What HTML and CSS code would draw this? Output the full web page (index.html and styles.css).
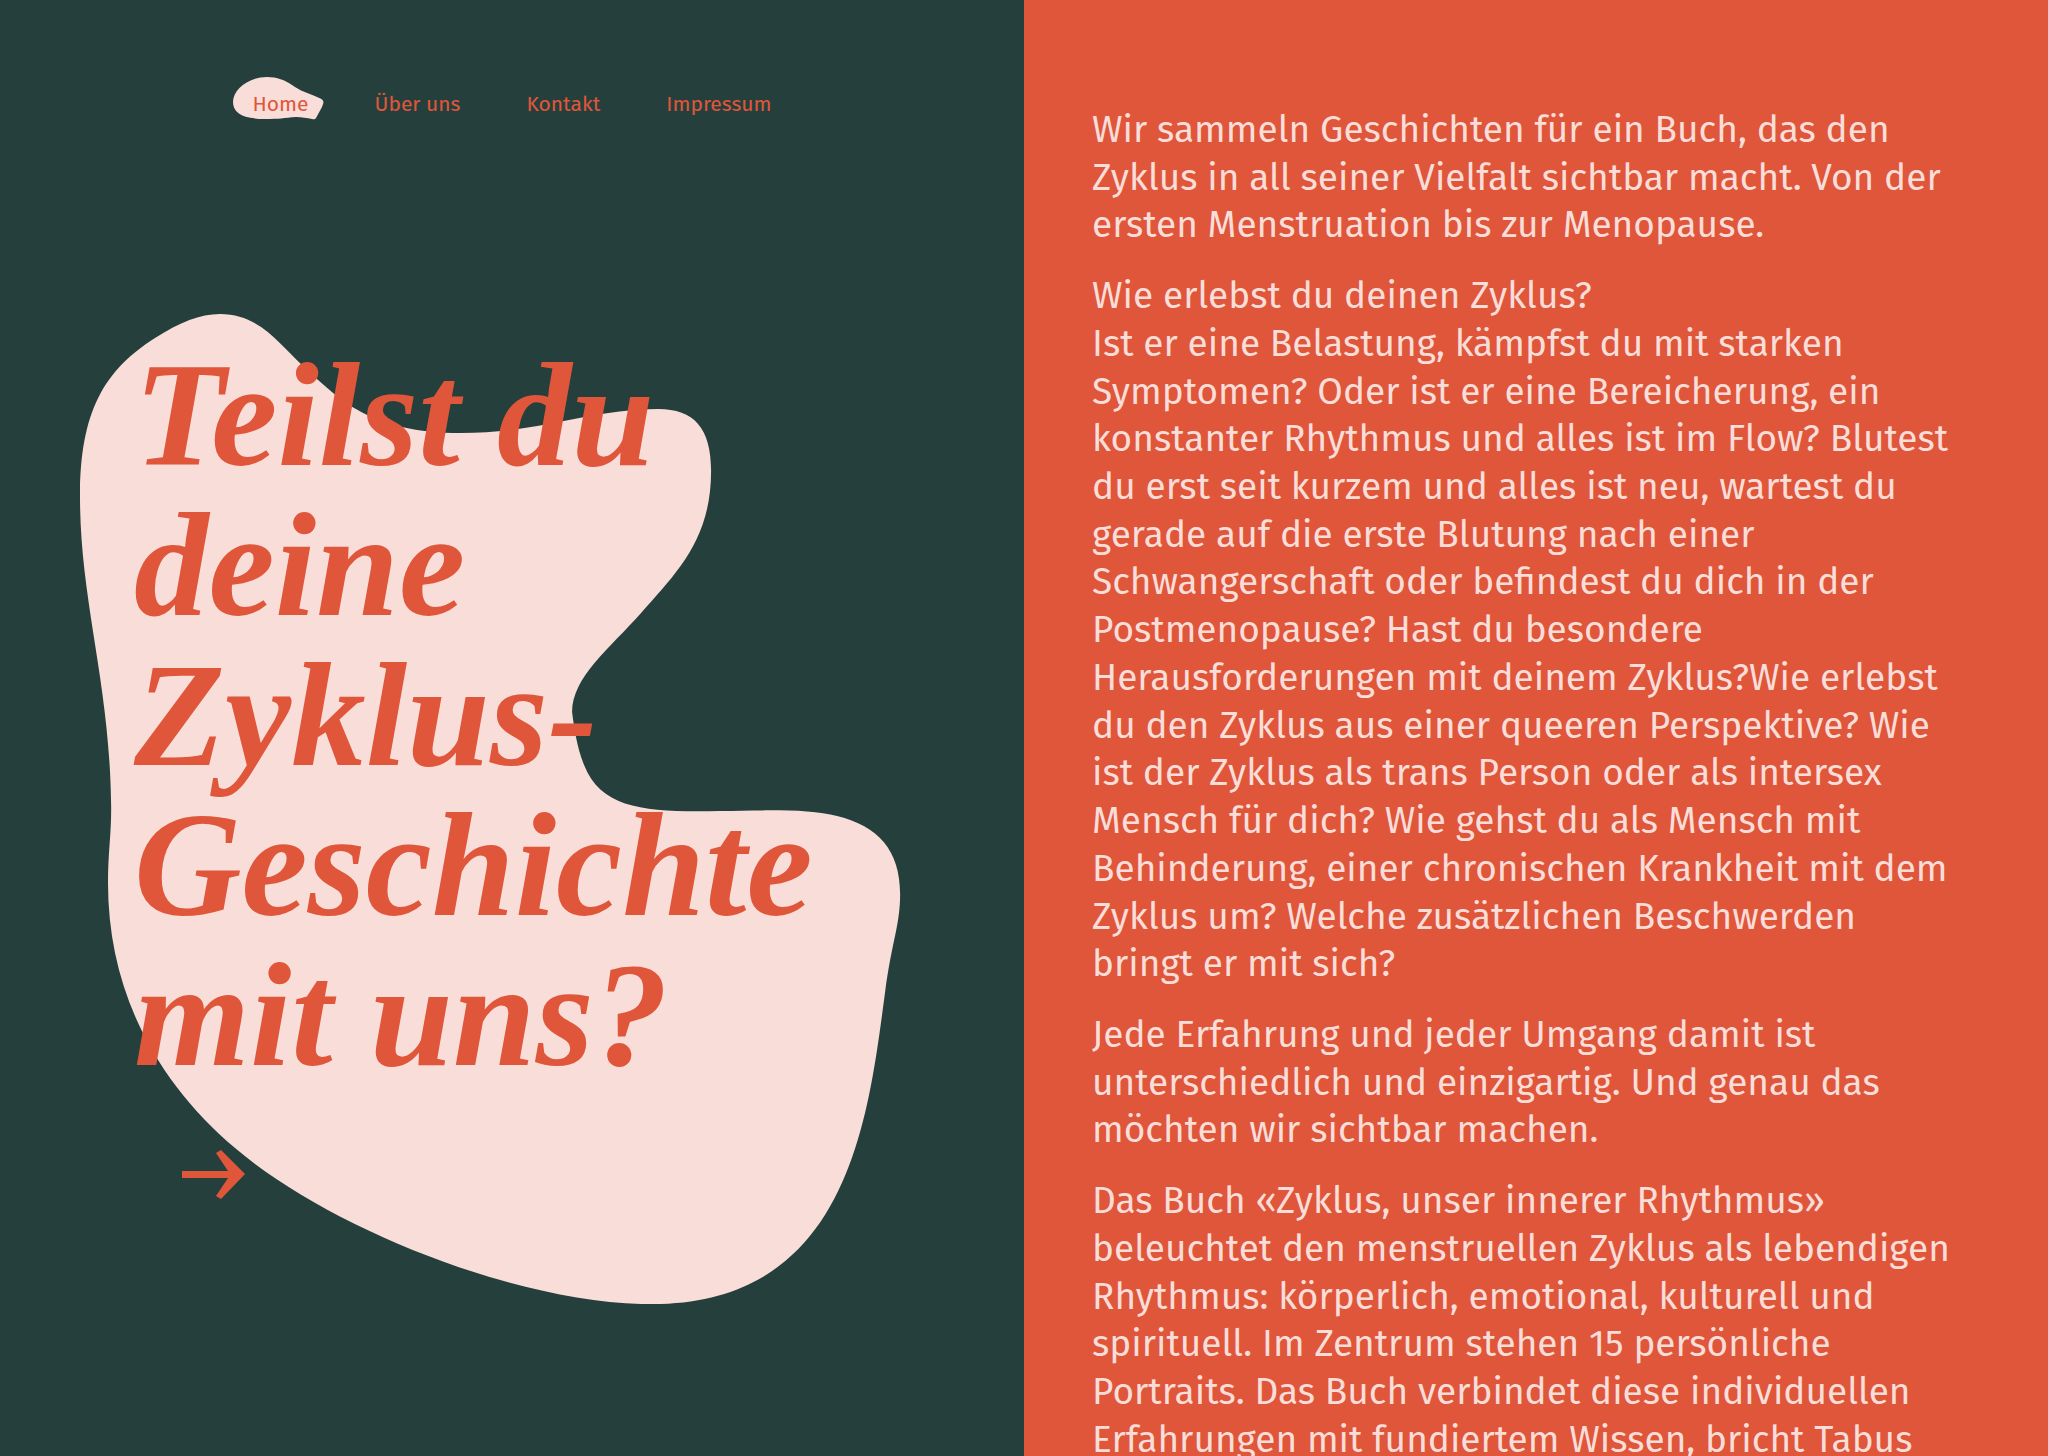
FILE: index.html
```html
<!DOCTYPE html>
<html lang="de">
<head>
  <meta charset="utf-8">
  <meta name="viewport" content="width=device-width, initial-scale=1">
  <title>Zyklus, unser innerer Rhythmus</title>
  <link rel="stylesheet" href="styles.css">
</head>
<body>
  <div class="split">
    <header class="intro">
      <nav class="nav" aria-label="Hauptnavigation">
        <a class="nav-link nav-link-active" href="#home" aria-current="page">
          <svg class="nav-blob" viewBox="233 77 91 43" aria-hidden="true">
            <path d="M233 102C233 90 248 77 267 77C277 77 285 80 292 85C300 91 308 93 317 97C325 100 324 102 322 107L316 118Q315 120 312 119C307 118 302 117 296 117C284 118 279 119 265 119C243 119 233 113 233 102Z"/>
          </svg>
          <span class="nav-text">Home</span>
        </a>
        <a class="nav-link" href="#ueber-uns">Über uns</a>
        <a class="nav-link" href="#kontakt">Kontakt</a>
        <a class="nav-link" href="#impressum">Impressum</a>
      </nav>
      <div class="hero">
        <svg class="hero-blob" viewBox="80 314 821 990" aria-hidden="true">
          <path d="M220 314C260 314 280 345 303 366C340 400 370 433 461 433C540 433 590 409 658 409C694 409 711 428 711 471C711 540 676 573 641 613C610 648 572 677 572 712C574 728 577 748 584 765C602 811 650 812 720 811C770 810 810 809 837 816C878 826 900 850 900 894C900 925 892 940 885 992C868 1117 850 1304 651 1304C520 1304 330 1229 235 1148C155 1080 108 990 108 883C108 850 112 830 111 800C109 680 80 600 80 497C80 410 105 370 155 338C180 322 200 314 220 314Z"/>
        </svg>
        <div class="hero-copy">
          <h1 class="title">Teilst du<br>deine<br>Zyklus-<br>Geschichte<br>mit uns?</h1>
          <a class="more" href="#mitmachen" aria-label="Weiter">
            <svg class="arrow" viewBox="0 0 66 52" aria-hidden="true">
              <path d="M2 23H48L36 5L41 2L65 26L41 51L36 48L48 30H2Z"/>
            </svg>
          </a>
        </div>
      </div>
    </header>
    <main class="story">
      <p>Wir sammeln Geschichten für ein Buch, das den Zyklus in all seiner Vielfalt sichtbar macht. Von der ersten Menstruation bis zur Menopause.</p>
      <p>Wie erlebst du deinen Zyklus?<br>Ist er eine Belastung, kämpfst du mit starken Symptomen? Oder ist er eine Bereicherung, ein konstanter Rhythmus und alles ist im Flow? Blutest du erst seit kurzem und alles ist neu, wartest du gerade auf die erste Blutung nach einer Schwangerschaft oder befindest du dich in der Postmenopause? Hast du besondere Herausforderungen mit deinem Zyklus?Wie erlebst du den Zyklus aus einer queeren Perspektive? Wie ist der Zyklus als trans Person oder als intersex Mensch für dich? Wie gehst du als Mensch mit Behinderung, einer chronischen Krankheit mit dem Zyklus um? Welche zusätzlichen Beschwerden bringt er mit sich?</p>
      <p>Jede Erfahrung und jeder Umgang damit ist unterschiedlich und einzigartig. Und genau das möchten wir sichtbar machen.</p>
      <p>Das Buch «Zyklus, unser innerer Rhythmus» beleuchtet den menstruellen Zyklus als lebendigen Rhythmus: körperlich, emotional, kulturell und spirituell. Im Zentrum stehen 15 persönliche Portraits. Das Buch verbindet diese individuellen Erfahrungen mit fundiertem Wissen, bricht Tabus</p>
    </main>
  </div>
</body>
</html>
```
FILE: styles.css
```css
:root {
  --green: #25403c;
  --red: #e0563a;
  --rose: #f9ddd8;
}

* {
  box-sizing: border-box;
}

body {
  margin: 0;
  background: var(--green);
  font-family: "Fira Sans", "PT Sans", Lato, sans-serif;
}

.split {
  display: grid;
  grid-template-columns: 1fr 1fr;
  height: 100vh;
  overflow: hidden;
}

.intro {
  color: var(--red);
  background: var(--green);
}

.nav {
  display: flex;
  justify-content: center;
  gap: 66px;
  padding-top: 89px;
  font-size: 21px;
  line-height: 30px;
}

.nav-link {
  color: inherit;
  text-decoration: none;
}

.nav-link-active {
  position: relative;
}

.nav-blob {
  position: absolute;
  top: -12px;
  left: -20px;
  width: 91px;
  height: 43px;
  fill: var(--rose);
}

.nav-text {
  position: relative;
}

.hero {
  display: grid;
  padding: 195px 12% 0 80px;
}

.hero-blob {
  grid-area: 1 / 1;
  width: 100%;
  fill: var(--rose);
}

.hero-copy {
  grid-area: 1 / 1;
  position: relative;
  padding: 26px 0 0 54px;
}

.title {
  margin: 0 0 58px;
  font: italic bold 149px/150px "Liberation Serif", "Times New Roman", serif;
}

.more {
  display: block;
  width: 66px;
  margin-left: 46px;
}

.arrow {
  display: block;
  width: 66px;
  height: 52px;
  fill: var(--red);
}

.story {
  padding: 106px 88px 0 68px;
  color: var(--rose);
  background: var(--red);
  font-size: 37px;
  line-height: 1.29;
}

.story p {
  margin: 0 0 23px;
}
```
